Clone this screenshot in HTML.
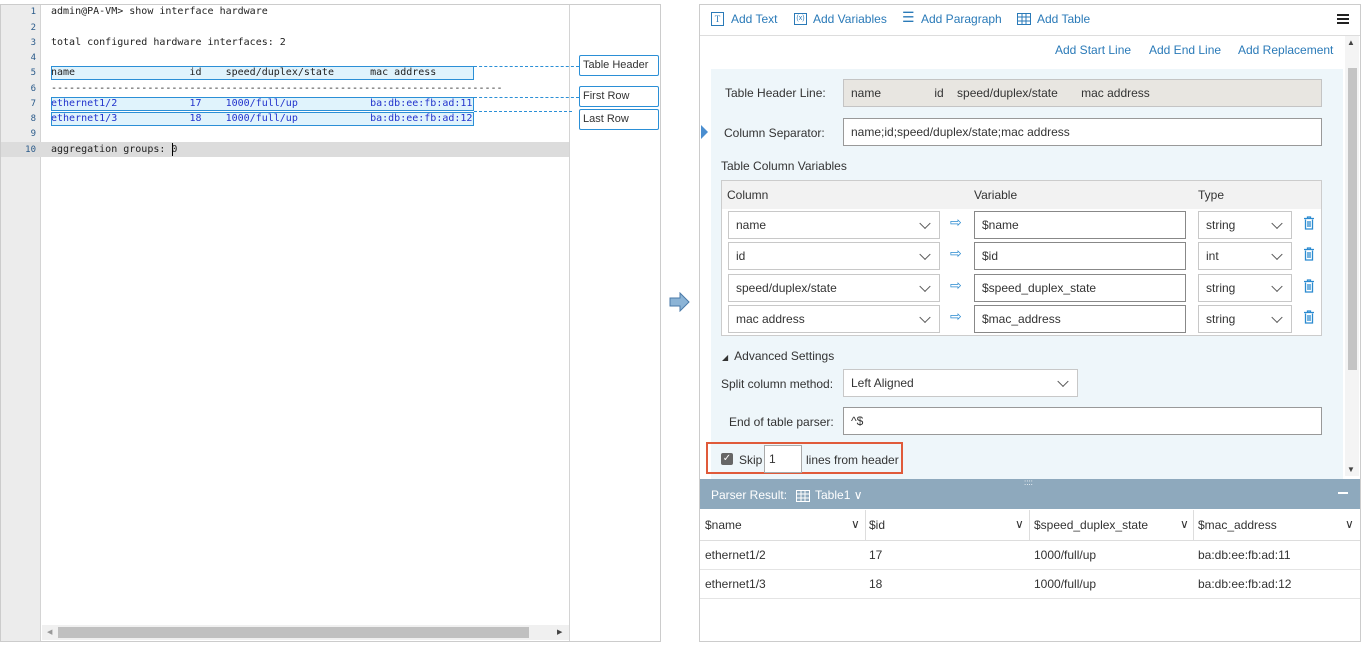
<!DOCTYPE html><html><head><meta charset="utf-8"><style>
*{box-sizing:border-box;margin:0;padding:0}
body{width:1363px;height:650px;background:#fff;position:relative;overflow:hidden;font-family:"Liberation Sans",sans-serif;font-size:12px;color:#333}
.a{position:absolute}
.mono{font-family:"DejaVu Sans Mono","Liberation Mono",monospace;font-size:10px;color:#222;white-space:pre}
.ln{position:absolute;left:0;width:36px;text-align:right;font-family:"DejaVu Sans Mono",monospace;font-size:9px;color:#2a5a8a}
.hl{position:absolute;left:51px;width:423px;height:14px;border:1px solid #2b8fd6;background:#e0f3fc}
.lab{position:absolute;left:579px;width:80px;height:21px;border:1px solid #2b8fd6;border-radius:2px;font-size:11px;padding:3px 3px;background:#fff}
.dash{position:absolute;border-top:1px dashed #2b8fd6;height:0}
.link{color:#2a7ab8}
.inp{position:absolute;background:#fff;border:1px solid #c8c8c8;font-size:12px;padding:0 7px;display:flex;align-items:center}
.sel::after{content:"";position:absolute;right:10px;top:50%;width:7px;height:7px;border-right:1px solid #555;border-bottom:1px solid #555;transform:translateY(-70%) rotate(45deg)}
.var{border-color:#888}
.arr{position:absolute;color:#2a8ad0;font-size:14px}
.trash{position:absolute}
</style></head><body>
<div class="a" style="left:0;top:4px;width:661px;height:638px;border:1px solid #ccc"></div>
<div class="a" style="left:1px;top:5px;width:40px;height:636px;background:#ececec;border-right:1px solid #d4d4d4"></div>
<div class="a" style="left:569px;top:5px;width:1px;height:636px;background:#d4d4d4"></div>
<div class="a" style="left:1px;top:142px;width:568px;height:15px;background:#dcdcdc"></div>
<div class="ln" style="top:7px">1</div><div class="ln" style="top:23px">2</div><div class="ln" style="top:38px">3</div><div class="ln" style="top:53px">4</div><div class="ln" style="top:68px">5</div><div class="ln" style="top:84px">6</div><div class="ln" style="top:99px">7</div><div class="ln" style="top:114px">8</div><div class="ln" style="top:129px">9</div><div class="ln" style="top:145px">10</div>
<div class="hl" style="top:66px"></div><div class="hl" style="top:97px"></div><div class="hl" style="top:112px"></div>
<div class="a mono" style="left:51px;top:6px">admin@PA-VM&gt; show interface hardware</div>
<div class="a mono" style="left:51px;top:37px">total configured hardware interfaces: 2</div>
<div class="a mono" style="left:51px;top:67px">name                   id    speed/duplex/state      mac address</div>
<div class="a mono" style="left:51px;top:83px">---------------------------------------------------------------------------</div>
<div class="a mono" style="left:51px;top:98px;color:#2233cc">ethernet1/2            17    1000/full/up            ba:db:ee:fb:ad:11</div>
<div class="a mono" style="left:51px;top:113px;color:#2233cc">ethernet1/3            18    1000/full/up            ba:db:ee:fb:ad:12</div>
<div class="a mono" style="left:51px;top:144px">aggregation groups: 0</div>
<div class="a" style="left:172px;top:143px;width:1px;height:13px;background:#000"></div>
<div class="dash" style="left:474px;top:66px;width:105px"></div>
<div class="dash" style="left:474px;top:97px;width:105px"></div>
<div class="dash" style="left:474px;top:111px;width:98px"></div>
<div class="lab" style="top:55px">Table Header</div>
<div class="lab" style="top:86px">First Row</div>
<div class="lab" style="top:109px">Last Row</div>
<div class="a" style="left:42px;top:625px;width:527px;height:15px;background:#f0f0f0"></div>
<div class="a" style="left:58px;top:627px;width:471px;height:11px;background:#c0c0c0"></div>
<div class="a" style="left:47px;top:628px;font-size:7px;color:#999">◀</div>
<div class="a" style="left:557px;top:628px;font-size:7px;color:#444">▶</div>
<svg class="a" style="left:669px;top:292px" width="22" height="20"><path d="M1 6h10V1l9 9-9 9v-5H1z" fill="#8cb4d6" stroke="#4a7aa8"/></svg>
<div class="a" style="left:699px;top:4px;width:662px;height:638px;border:1px solid #ccc"></div>
<div class="a" style="left:700px;top:35px;width:660px;height:1px;background:#ddd"></div>
<div class="a link" style="left:711px;top:12px;width:13px;height:14px;border:1px solid #2a7ab8;font-size:9px;text-align:center;line-height:12px;font-family:'Liberation Serif'">T</div>
<div class="a link" style="left:731px;top:12px;font-size:12px">Add Text</div>
<div class="a link" style="left:794px;top:13px;width:13px;height:12px;border:1px solid #2a7ab8;font-size:7px;text-align:center;line-height:10px">(x)</div>
<div class="a link" style="left:813px;top:12px">Add Variables</div>
<div class="a link" style="left:902px;top:9px;font-size:14px">☰</div>
<div class="a link" style="left:921px;top:12px">Add Paragraph</div>
<svg class="a" style="left:1017px;top:13px" width="14" height="12"><rect x=".5" y=".5" width="13" height="11" fill="none" stroke="#2a7ab8"/><path d="M.5 4h13M.5 8h13M5 .5v11M9 .5v11" stroke="#2a7ab8"/></svg>
<div class="a link" style="left:1037px;top:12px">Add Table</div>
<svg class="a" style="left:1337px;top:13px" width="12" height="12"><path d="M0 2h12M0 6h12M0 10h12" stroke="#222" stroke-width="2"/></svg>
<div class="a link" style="left:1055px;top:43px">Add Start Line</div>
<div class="a link" style="left:1149px;top:43px">Add End Line</div>
<div class="a link" style="left:1238px;top:43px">Add Replacement</div>
<div class="a" style="left:1345px;top:36px;width:14px;height:440px;background:#f4f4f4"></div>
<div class="a" style="left:1348px;top:68px;width:9px;height:302px;background:#c4c4c4"></div>
<div class="a" style="left:1347px;top:38px;font-size:8px;color:#444">▲</div>
<div class="a" style="left:1347px;top:465px;font-size:8px;color:#444">▼</div>
<div class="a" style="left:711px;top:69px;width:632px;height:410px;background:#eef6fa"></div>
<div class="a" style="left:701px;top:125px;width:0;height:0;border-top:7px solid transparent;border-bottom:7px solid transparent;border-left:7px solid #4a8ed0"></div>
<div class="a" style="left:725px;top:86px">Table Header Line:</div>
<div class="inp" style="left:843px;top:79px;width:479px;height:28px;background:#e8e6e1;border-color:#c4c4c4;white-space:pre">name                id    speed/duplex/state       mac address</div>
<div class="a" style="left:724px;top:126px">Column Separator:</div>
<div class="inp" style="left:843px;top:118px;width:479px;height:28px;border-color:#999">name;id;speed/duplex/state;mac address</div>
<div class="a" style="left:721px;top:159px">Table Column Variables</div>
<div class="a" style="left:721px;top:180px;width:601px;height:156px;border:1px solid #ccc;background:#f2f2f2"></div>
<div class="a" style="left:727px;top:188px">Column</div><div class="a" style="left:974px;top:188px">Variable</div><div class="a" style="left:1198px;top:188px">Type</div>
<div class="a" style="left:722px;top:209px;width:599px;height:126px;background:#fff"></div>

<div class="inp sel" style="left:728px;top:211px;width:212px;height:28px">name</div><div class="arr" style="left:950px;top:214px">⇨</div><div class="inp var" style="left:974px;top:211px;width:212px;height:28px">$name</div><div class="inp sel" style="left:1198px;top:211px;width:94px;height:28px">string</div>
<svg class="trash" style="left:1303px;top:216px" width="12" height="14"><path d="M1 2.5h10M4.5 2.5V1h3v1.5M2.5 3.5v9.5h7V3.5M5 5v6M7 5v6" fill="none" stroke="#2a8ad0" stroke-width="1.3"/></svg>
<div class="inp sel" style="left:728px;top:242px;width:212px;height:28px">id</div><div class="arr" style="left:950px;top:245px">⇨</div><div class="inp var" style="left:974px;top:242px;width:212px;height:28px">$id</div><div class="inp sel" style="left:1198px;top:242px;width:94px;height:28px">int</div>
<svg class="trash" style="left:1303px;top:247px" width="12" height="14"><path d="M1 2.5h10M4.5 2.5V1h3v1.5M2.5 3.5v9.5h7V3.5M5 5v6M7 5v6" fill="none" stroke="#2a8ad0" stroke-width="1.3"/></svg>
<div class="inp sel" style="left:728px;top:274px;width:212px;height:28px">speed/duplex/state</div><div class="arr" style="left:950px;top:277px">⇨</div><div class="inp var" style="left:974px;top:274px;width:212px;height:28px">$speed_duplex_state</div><div class="inp sel" style="left:1198px;top:274px;width:94px;height:28px">string</div>
<svg class="trash" style="left:1303px;top:279px" width="12" height="14"><path d="M1 2.5h10M4.5 2.5V1h3v1.5M2.5 3.5v9.5h7V3.5M5 5v6M7 5v6" fill="none" stroke="#2a8ad0" stroke-width="1.3"/></svg>
<div class="inp sel" style="left:728px;top:305px;width:212px;height:28px">mac address</div><div class="arr" style="left:950px;top:308px">⇨</div><div class="inp var" style="left:974px;top:305px;width:212px;height:28px">$mac_address</div><div class="inp sel" style="left:1198px;top:305px;width:94px;height:28px">string</div>
<svg class="trash" style="left:1303px;top:310px" width="12" height="14"><path d="M1 2.5h10M4.5 2.5V1h3v1.5M2.5 3.5v9.5h7V3.5M5 5v6M7 5v6" fill="none" stroke="#2a8ad0" stroke-width="1.3"/></svg>

<div class="a" style="left:722px;top:349px"><span style="font-size:8px">◢</span>&nbsp; Advanced Settings</div>
<div class="a" style="left:721px;top:377px">Split column method:</div>
<div class="inp sel" style="left:843px;top:369px;width:235px;height:28px">Left Aligned</div>
<div class="a" style="left:729px;top:415px">End of table parser:</div>
<div class="inp" style="left:843px;top:407px;width:479px;height:28px;border-color:#999">^$</div>
<div class="a" style="left:706px;top:442px;width:197px;height:32px;border:2px solid #e05a3a"></div>
<div class="a" style="left:721px;top:453px;width:12px;height:12px;background:#666;border-radius:2px;color:#fff;font-size:10px;line-height:12px;text-align:center">✓</div>
<div class="a" style="left:739px;top:453px">Skip</div>
<div class="inp" style="left:764px;top:445px;width:38px;height:28px;border-color:#aaa;padding:0 4px">1</div>
<div class="a" style="left:806px;top:453px">lines from header</div>
<div class="a" style="left:700px;top:479px;width:660px;height:30px;background:#8ea9bd"></div>
<div class="a" style="left:1024px;top:478px;color:#fff;font-size:8px">::::</div>
<div class="a" style="left:711px;top:488px;color:#fff">Parser Result:</div>
<svg class="a" style="left:796px;top:490px" width="14" height="12"><rect x=".5" y=".5" width="13" height="11" fill="none" stroke="#fff"/><path d="M.5 4h13M.5 8h13M5 .5v11M9 .5v11" stroke="#fff"/></svg>
<div class="a" style="left:815px;top:488px;color:#fff">Table1 ∨</div>
<div class="a" style="left:1338px;top:492px;width:10px;height:2px;background:#fff"></div>
<div class="a" style="left:700px;top:540px;width:660px;height:1px;background:#ddd"></div>
<div class="a" style="left:700px;top:569px;width:660px;height:1px;background:#e4e4e4"></div>
<div class="a" style="left:700px;top:598px;width:660px;height:1px;background:#e4e4e4"></div>
<div class="a" style="left:865px;top:510px;width:1px;height:30px;background:#ddd"></div>
<div class="a" style="left:1029px;top:510px;width:1px;height:30px;background:#ddd"></div>
<div class="a" style="left:1193px;top:510px;width:1px;height:30px;background:#ddd"></div>
<div class="a" style="left:705px;top:518px">$name</div><div class="a" style="left:851px;top:517px">∨</div>
<div class="a" style="left:869px;top:518px">$id</div><div class="a" style="left:1015px;top:517px">∨</div>
<div class="a" style="left:1034px;top:518px">$speed_duplex_state</div><div class="a" style="left:1180px;top:517px">∨</div>
<div class="a" style="left:1198px;top:518px">$mac_address</div><div class="a" style="left:1345px;top:517px">∨</div>
<div class="a" style="left:705px;top:548px">ethernet1/2</div><div class="a" style="left:869px;top:548px">17</div><div class="a" style="left:1034px;top:548px">1000/full/up</div><div class="a" style="left:1198px;top:548px">ba:db:ee:fb:ad:11</div>
<div class="a" style="left:705px;top:577px">ethernet1/3</div><div class="a" style="left:869px;top:577px">18</div><div class="a" style="left:1034px;top:577px">1000/full/up</div><div class="a" style="left:1198px;top:577px">ba:db:ee:fb:ad:12</div>
</body></html>
